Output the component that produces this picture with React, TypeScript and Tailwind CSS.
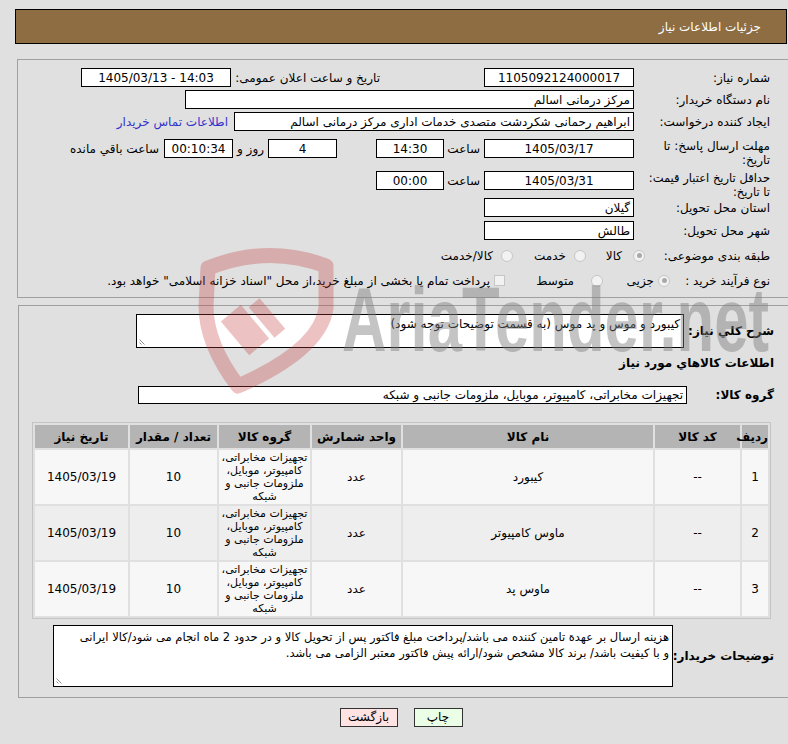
import React from 'react';

type BoxProps = { className?: string; children?: React.ReactNode; center?: boolean };

// read-only field drawn as a bordered white box
function Box({ className = '', children, center = false }: BoxProps) {
  return (
    <div
      className={`h-[19px] shrink-0 border border-black bg-white px-[3px] flex items-center overflow-hidden whitespace-nowrap ${
        center ? 'justify-center' : ''
      } ${className}`}
    >
      {children}
    </div>
  );
}

function Radio({ checked = false }: { checked?: boolean }) {
  return (
    <span className="w-[12px] h-[12px] shrink-0 rounded-full border border-[#c6c6c6] bg-[#f2f2f2] flex items-center justify-center">
      {checked && <span className="w-[5px] h-[5px] rounded-full bg-[#a9a9a9]" />}
    </span>
  );
}

function Grip() {
  return (
    <svg className="absolute left-[2px] bottom-[2px]" width="8" height="8" viewBox="0 0 8 8">
      <path d="M0.5 2.5 L5.5 7.5 M0.5 5.5 L2.5 7.5" stroke="#8a8a8a" strokeWidth="1" fill="none" />
    </svg>
  );
}

const items = [
  { id: 1, code: '--', name: 'کیبورد' },
  { id: 2, code: '--', name: 'ماوس کامپیوتر' },
  { id: 3, code: '--', name: 'ماوس پد' },
];

export default function App() {
  return (
    <div
      dir="rtl"
      className="relative w-[788px] h-[744px] overflow-hidden bg-[#e0e0e0] text-[12px] leading-[14px] text-black font-['Tahoma','DejaVu_Sans',sans-serif]"
    >
      {/* Header */}
      <div className="mt-[9px] ml-[15px] mr-[1px] h-[35px] border border-black bg-[#8e6d43] flex items-center pr-[25px] text-white">
        جزئیات اطلاعات نیاز
      </div>

      {/* Main info */}
      <div className="mt-[15px] ml-[17px] mr-[-3px] border border-[#a0a0a0] pt-[8px] pb-[7px] pr-[20px]">
        <div className="flex items-center h-[19px]">
          <div className="w-[125px] shrink-0 whitespace-nowrap">شماره نیاز:</div>
          <Box center className="mr-[11px] w-[150px]">1105092124000017</Box>
          <div className="mr-[104px] w-[149px] shrink-0 whitespace-nowrap">تاریخ و ساعت اعلان عمومی:</div>
          <Box center className="w-[150px]">
            <span dir="ltr">1405/03/13 - 14:03</span>
          </Box>
        </div>

        <div className="flex items-center h-[19px] mt-[3px]">
          <div className="w-[125px] shrink-0 whitespace-nowrap">نام دستگاه خریدار:</div>
          <Box className="mr-[11px] w-[449px]">مرکز درمانی اسالم</Box>
        </div>

        <div className="flex items-center h-[19px] mt-[3px]">
          <div className="w-[125px] shrink-0 whitespace-nowrap">ایجاد کننده درخواست:</div>
          <Box className="mr-[11px] w-[400px]">ابراهیم رحمانی شکردشت متصدی خدمات اداری مرکز درمانی اسالم</Box>
          <span className="mr-[6px] text-[#3333cc] whitespace-nowrap">اطلاعات تماس خریدار</span>
        </div>

        <div className="flex items-start h-[31px] mt-[8px]">
          <div className="w-[125px] shrink-0 whitespace-nowrap">
            مهلت ارسال پاسخ: تا
            <br />
            تاریخ:
          </div>
          <Box center className="mr-[11px] w-[150px]">1405/03/17</Box>
          <span className="w-[40px] shrink-0 h-[19px] flex items-center pr-[4px]">ساعت</span>
          <Box center className="w-[68px]">14:30</Box>
          <Box center className="mr-[39px] w-[69px]">4</Box>
          <span className="w-[35px] shrink-0 h-[19px] flex items-center justify-center">روز و</span>
          <Box center className="w-[69px] bg-[#ffffe6]">00:10:34</Box>
          <span className="mr-[5px] h-[19px] flex items-center whitespace-nowrap">ساعت باقي مانده</span>
        </div>

        <div className="flex items-start h-[27px] mt-[1px]">
          <div className="w-[125px] shrink-0 whitespace-nowrap text-[11.5px]">
            حداقل تاریخ اعتبار قیمت:
            <br />
            تا تاریخ:
          </div>
          <Box center className="mr-[11px] w-[150px]">1405/03/31</Box>
          <span className="w-[40px] shrink-0 h-[19px] flex items-center pr-[4px]">ساعت</span>
          <Box center className="w-[68px]">00:00</Box>
        </div>

        <div className="flex items-center h-[19px]">
          <div className="w-[125px] shrink-0 whitespace-nowrap">استان محل تحویل:</div>
          <Box className="mr-[11px] w-[150px]">گیلان</Box>
        </div>

        <div className="flex items-center h-[19px] mt-[4px]">
          <div className="w-[125px] shrink-0 whitespace-nowrap">شهر محل تحویل:</div>
          <Box className="mr-[11px] w-[150px]">طالش</Box>
        </div>

        <div className="flex items-center h-[19px] mt-[6px]">
          <div className="w-[125px] shrink-0 whitespace-nowrap">طبقه بندی موضوعی:</div>
          <div className="w-[59px] shrink-0 flex items-center">
            <Radio checked />
            <span className="mr-[11px]">کالا</span>
          </div>
          <div className="w-[73px] shrink-0 flex items-center">
            <Radio />
            <span className="mr-[8px]">خدمت</span>
          </div>
          <div className="flex items-center">
            <Radio />
            <span className="mr-[8px]">کالا/خدمت</span>
          </div>
        </div>

        <div className="flex items-center h-[19px] mt-[6px]">
          <div className="w-[100px] shrink-0 whitespace-nowrap">نوع فرآیند خرید :</div>
          <div className="w-[67px] shrink-0 flex items-center">
            <Radio checked />
            <span className="mr-[4px]">جزیی</span>
          </div>
          <div className="w-[98px] shrink-0 flex items-center">
            <Radio />
            <span className="mr-[17px]">متوسط</span>
          </div>
          <span className="w-[11px] h-[11px] shrink-0 border border-[#c6c6c6] bg-[#f2f2f2]" />
          <span className="mr-[4px] whitespace-nowrap">
            پرداخت تمام یا بخشی از مبلغ خرید،از محل "اسناد خزانه اسلامی" خواهد بود.
          </span>
        </div>
      </div>

      {/* Items section */}
      <div className="mt-[7px] ml-[18px] mr-[-3px] border border-[#a0a0a0] pt-[8px] pb-[10px] pr-[16px]">
        <div className="flex items-center h-[34px]">
          <div className="w-[90px] shrink-0 font-bold whitespace-nowrap">شرح کلي نياز:</div>
          <div className="relative w-[548px] h-[34px] border border-black bg-white px-[3px] pt-[2px]">
            کیبورد و موس و پد موس (به قسمت توضیحات توجه شود)
            <Grip />
          </div>
        </div>

        <div className="mt-[8px] h-[14px] font-bold">اطلاعات کالاهاي مورد نياز</div>

        <div className="flex items-center h-[18px] mt-[16px]">
          <div className="w-[87px] shrink-0 font-bold whitespace-nowrap">گروه کالا:</div>
          <div className="w-[549px] h-[18px] border border-black bg-white px-[3px] flex items-center whitespace-nowrap overflow-hidden">
            تجهیزات مخابراتی، کامپیوتر، موبایل، ملزومات جانبی و شبکه
          </div>
        </div>

        <table className="table-fixed mt-[18px] mr-[3px] w-[739px] border border-[#c4c4c4] border-separate border-spacing-[2px] text-center">
          <thead>
            <tr className="h-[23px] bg-[#b4b4b4] font-bold">
              <th className="w-[26px] p-0 whitespace-nowrap">ردیف</th>
              <th className="w-[85px] p-0">کد کالا</th>
              <th className="w-[250px] p-0">نام کالا</th>
              <th className="w-[89px] p-0">واحد شمارش</th>
              <th className="w-[91px] p-0">گروه کالا</th>
              <th className="w-[87px] p-0">تعداد / مقدار</th>
              <th className="w-[93px] p-0">تاریخ نیاز</th>
            </tr>
          </thead>
          <tbody>
            {items.map((item, idx) => (
              <tr key={item.id} className={`h-[54px] ${idx % 2 === 1 ? 'bg-[#eeeeee]' : 'bg-[#f7f7f7]'}`}>
                <td className="p-0">{item.id}</td>
                <td className="p-0">{item.code}</td>
                <td className="p-0">{item.name}</td>
                <td className="p-0">عدد</td>
                <td className="p-0 text-[11px] leading-[13px] whitespace-nowrap overflow-visible">
                  تجهیزات مخابراتی،
                  <br />
                  کامپیوتر، موبایل،
                  <br />
                  ملزومات جانبی و
                  <br />
                  شبکه
                </td>
                <td className="p-0">10</td>
                <td className="p-0">1405/03/19</td>
              </tr>
            ))}
          </tbody>
        </table>

        <div className="flex items-center h-[62px] mt-[6px]">
          <div className="w-[101px] shrink-0 font-bold whitespace-nowrap">توضیحات خریدار:</div>
          <div className="relative w-[620px] h-[62px] border border-black bg-white px-[3px] pt-[3px] leading-[16px] text-[11.5px] whitespace-nowrap overflow-hidden">
            هزینه ارسال بر عهدة تامین کننده می باشد/پرداخت مبلغ فاکتور پس از تحویل کالا و در حدود 2 ماه انجام می شود/کالا ایرانی
            <br />
            و با کیفیت باشد/ برند کالا مشخص شود/ارائه پیش فاکتور معتبر الزامی می باشد.
            <Grip />
          </div>
        </div>
      </div>

      {/* Actions */}
      <div className="mt-[10px] flex justify-center gap-[16px] pl-[14px]">
        <button className="h-[19px] w-[49px] border border-[#333] bg-[#eaffe6] leading-[17px]">چاپ</button>
        <button className="h-[19px] w-[58px] border border-[#333] bg-[#ffe2e2] leading-[17px]">بازگشت</button>
      </div>

      {/* AriaTender watermark */}
      <div className="pointer-events-none absolute inset-0">
        <svg className="absolute left-[196px] top-[246px]" width="150" height="150" viewBox="0 0 150 150">
          <g fill="none" stroke="rgba(196,52,52,0.3)" strokeWidth="15" strokeLinejoin="round">
            <path d="M12 22 Q72 -2 130 20 L130 62 Q124 104 42 140 Q10 98 10 60 Z" />
          </g>
          <g fill="rgba(196,52,52,0.3)">
            <rect x="36" y="62" width="26" height="44" transform="rotate(-40 49 84)" />
            <rect x="64" y="52" width="14" height="40" transform="rotate(-40 71 72)" />
          </g>
        </svg>
        <div className="absolute left-[342px] top-[275px] h-[90px] leading-[90px] text-[90px] font-bold text-[#7d7d7d] opacity-45 origin-left scale-x-[0.685] whitespace-nowrap font-['Liberation_Sans',sans-serif]" dir="ltr">
          AriaTender.net
        </div>
      </div>
    </div>
  );
}
